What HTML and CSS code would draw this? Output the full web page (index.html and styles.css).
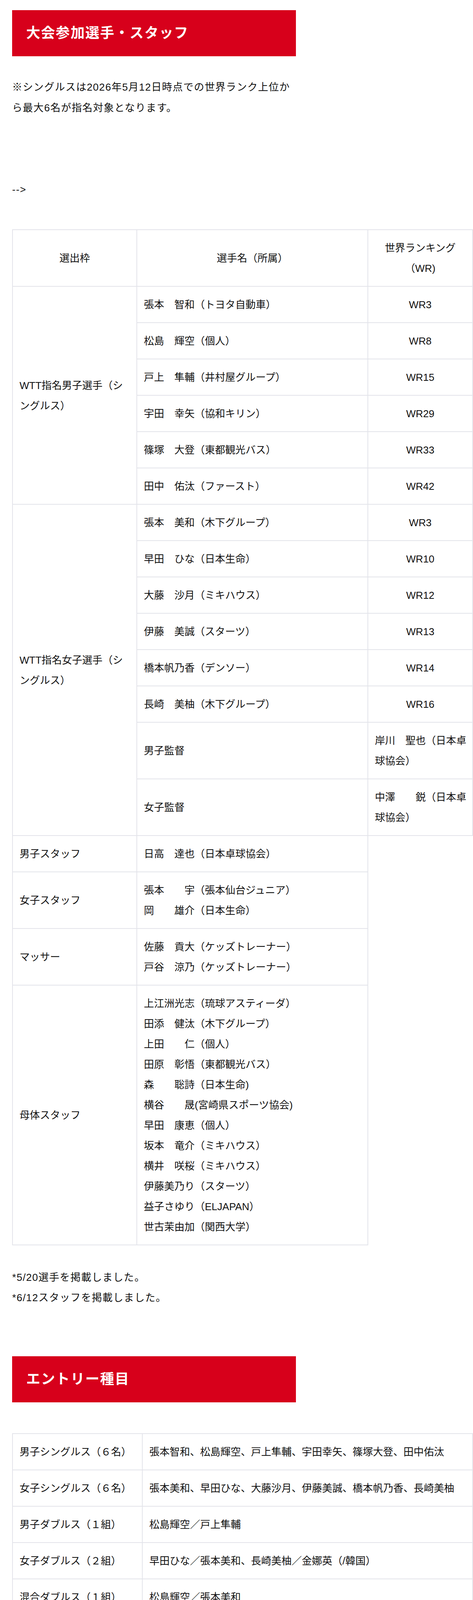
FILE: index.html
```html
<!DOCTYPE html>
<html lang="ja">
<head>
<meta charset="utf-8">
<title>大会参加選手・スタッフ</title>
<link rel="stylesheet" href="styles.css">
</head>
<body>
<div class="page">
  <h2 class="heading">大会参加選手・スタッフ</h2>
  <p class="lead">※シングルスは2026年5月12日時点での世界ランク上位から最大6名が指名対象となります。</p>
  <p class="arrow">--&gt;</p>

  <table class="roster">
    <tr>
      <th class="c-slot">選出枠</th>
      <th class="c-name">選手名（所属）</th>
      <th class="c-rank">世界ランキング（WR)</th>
    </tr>
    <tr>
      <td rowspan="6">WTT指名男子選手（シングルス）</td>
      <td>張本　智和（トヨタ自動車）</td>
      <td class="rank">WR3</td>
    </tr>
    <tr><td>松島　輝空（個人）</td><td class="rank">WR8</td></tr>
    <tr><td>戸上　隼輔（井村屋グループ）</td><td class="rank">WR15</td></tr>
    <tr><td>宇田　幸矢（協和キリン）</td><td class="rank">WR29</td></tr>
    <tr><td>篠塚　大登（東都観光バス）</td><td class="rank">WR33</td></tr>
    <tr><td>田中　佑汰（ファースト）</td><td class="rank">WR42</td></tr>
    <tr>
      <td rowspan="8">WTT指名女子選手（シングルス）</td>
      <td>張本　美和（木下グループ）</td>
      <td class="rank">WR3</td>
    </tr>
    <tr><td>早田　ひな（日本生命）</td><td class="rank">WR10</td></tr>
    <tr><td>大藤　沙月（ミキハウス）</td><td class="rank">WR12</td></tr>
    <tr><td>伊藤　美誠（スターツ）</td><td class="rank">WR13</td></tr>
    <tr><td>橋本帆乃香（デンソー）</td><td class="rank">WR14</td></tr>
    <tr><td>長崎　美柚（木下グループ）</td><td class="rank">WR16</td></tr>
    <tr><td>男子監督</td><td>岸川　聖也（日本卓球協会）</td></tr>
    <tr><td>女子監督</td><td>中澤　　鋭（日本卓球協会）</td></tr>
    <tr><td>男子スタッフ</td><td>日高　達也（日本卓球協会）</td></tr>
    <tr><td>女子スタッフ</td><td>張本　　宇（張本仙台ジュニア）<br>岡　　雄介（日本生命）</td></tr>
    <tr><td>マッサー</td><td>佐藤　貢大（ケッズトレーナー）<br>戸谷　涼乃（ケッズトレーナー）</td></tr>
    <tr>
      <td>母体スタッフ</td>
      <td>上江洲光志（琉球アスティーダ）<br>田添　健汰（木下グループ）<br>上田　　仁（個人）<br>田原　彰悟（東都観光バス）<br>森　　聡詩（日本生命)<br>横谷　　晟(宮崎県スポーツ協会)<br>早田　康恵（個人）<br>坂本　竜介（ミキハウス）<br>横井　咲桜（ミキハウス）<br>伊藤美乃り（スターツ）<br>益子さゆり（ELJAPAN）<br>世古茉由加（関西大学）</td>
    </tr>
  </table>

  <p class="notes">*5/20選手を掲載しました。<br>*6/12スタッフを掲載しました。</p>

  <h2 class="heading heading-entry">エントリー種目</h2>

  <table class="entry">
    <tr><td class="c-event">男子シングルス（６名）</td><td class="c-players">張本智和、松島輝空、戸上隼輔、宇田幸矢、篠塚大登、田中佑汰</td></tr>
    <tr><td>女子シングルス（６名）</td><td>張本美和、早田ひな、大藤沙月、伊藤美誠、橋本帆乃香、長崎美柚</td></tr>
    <tr><td>男子ダブルス（１組）</td><td>松島輝空／戸上隼輔</td></tr>
    <tr><td>女子ダブルス（２組）</td><td>早田ひな／張本美和、長崎美柚／金娜英（/韓国）</td></tr>
    <tr><td>混合ダブルス（１組）</td><td>松島輝空／張本美和</td></tr>
  </table>
</div>
</body>
</html>
```

FILE: styles.css
```css
html, body {
  margin: 0;
  padding: 0;
  background: #ffffff;
}

body {
  font-family: "Liberation Sans", "Noto Sans CJK JP", sans-serif;
  color: #111111;
  font-size: 26px;
  line-height: 52px;
}

.page {
  padding: 26px 0 0 31px;
}

.heading {
  box-sizing: border-box;
  width: 726px;
  height: 118px;
  margin: 0;
  padding: 0 36px;
  display: flex;
  align-items: center;
  background: #d7001b;
  color: #ffffff;
  font-size: 36px;
  font-weight: 700;
  letter-spacing: 0.05em;
  line-height: 1;
}

.lead {
  width: 726px;
  margin: 53px 0 0;
  line-height: 53px;
  letter-spacing: 0.05em;
}

.arrow {
  margin: 156px 0 0;
  letter-spacing: 0.05em;
}

table {
  border-collapse: collapse;
  table-layout: fixed;
  width: 1177px;
}

td, th {
  box-sizing: border-box;
  border: 2px solid #e3e4ea;
  padding: 20px 13px 19px 17px;
  vertical-align: middle;
  text-align: left;
  font-weight: 400;
  line-height: 52px;
}

th {
  text-align: center;
  padding-left: 15px;
  padding-right: 15px;
}

.roster {
  margin-top: 76px;
}

.c-slot { width: 318px; }
.c-name { width: 591px; }
.c-rank { width: 268px; }

.rank {
  text-align: center;
  padding-left: 15px;
  padding-right: 15px;
}

.notes {
  margin: 56px 0 0;
  letter-spacing: 0.05em;
}

.heading-entry {
  margin-top: 124px;
}

.entry {
  margin-top: 79px;
}

.c-event { width: 332px; }
.c-players { width: 845px; }
```
